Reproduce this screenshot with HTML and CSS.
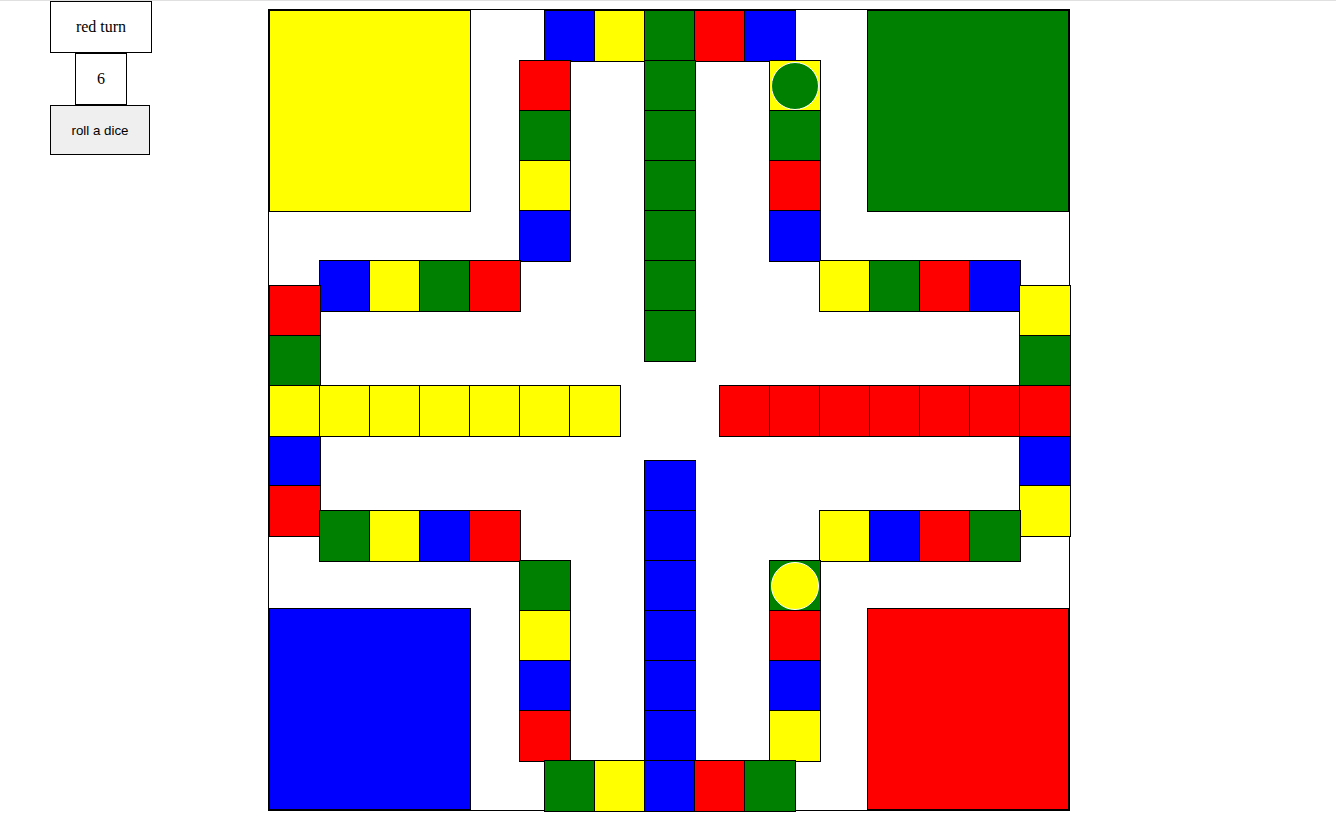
FILE: index.html
```html
<html>
<head>
  <meta http-equiv="Content-Type" content="text/html; charset=utf8">
  <title>Ludo</title>
  <link rel="stylesheet" href="styles.css">
  <script>
    // cells: [col, row, color, piece] in 25px steps
    var cells = [
      [11, 0, "blue"], [13, 0, "yellow"], [15, 0, "green"], [17, 0, "red"], [19, 0, "blue"],
      [10, 2, "red"], [10, 4, "green"], [10, 6, "yellow"], [10, 8, "blue"],
      [15, 2, "green"], [15, 4, "green"], [15, 6, "green"], [15, 8, "green"], [15, 10, "green"], [15, 12, "green"],
      [20, 2, "yellow", "green"], [20, 4, "green"], [20, 6, "red"], [20, 8, "blue"],
      [2, 10, "blue"], [4, 10, "yellow"], [6, 10, "green"], [8, 10, "red"],
      [22, 10, "yellow"], [24, 10, "green"], [26, 10, "red"], [28, 10, "blue"],
      [0, 11, "red"], [0, 13, "green"], [0, 17, "blue"], [0, 19, "red"],
      [30, 11, "yellow"], [30, 13, "green"], [30, 17, "blue"], [30, 19, "yellow"],
      [0, 15, "yellow"], [2, 15, "yellow"], [4, 15, "yellow"], [6, 15, "yellow"], [8, 15, "yellow"], [10, 15, "yellow"], [12, 15, "yellow"],
      [18, 15, "red"], [20, 15, "red"], [22, 15, "red"], [24, 15, "red"], [26, 15, "red"], [28, 15, "red"], [30, 15, "red"],
      [2, 20, "green"], [4, 20, "yellow"], [6, 20, "blue"], [8, 20, "red"],
      [22, 20, "yellow"], [24, 20, "blue"], [26, 20, "red"], [28, 20, "green"],
      [10, 22, "green"], [10, 24, "yellow"], [10, 26, "blue"], [10, 28, "red"],
      [15, 18, "blue"], [15, 20, "blue"], [15, 22, "blue"], [15, 24, "blue"], [15, 26, "blue"], [15, 28, "blue"],
      [20, 22, "green", "yellow"], [20, 24, "red"], [20, 26, "blue"], [20, 28, "yellow"],
      [11, 30, "green"], [13, 30, "yellow"], [15, 30, "blue"], [17, 30, "red"], [19, 30, "green"]
    ];

    function on_load() {
      var board = document.getElementById("board");
      for (var i = 0; i < cells.length; ++i) {
        var c = cells[i];
        var el = document.createElement("div");
        el.className = "cell " + c[2];
        el.style.gridColumn = (c[0] + 1) + " / span 2";
        el.style.gridRow = (c[1] + 1) + " / span 2";
        if (c[3]) {
          var p = document.createElement("div");
          p.className = "piece " + c[3];
          el.appendChild(p);
        }
        board.appendChild(el);
      }
    }
  </script>
</head>
<body onload="on_load()">
  <div class="page">
    <div class="controls">
      <div class="turn">red turn</div>
      <div class="dice">6</div>
      <button class="btn_roll">roll a dice</button>
    </div>
    <div id="board" class="board">
      <div class="home home_yellow yellow"></div>
      <div class="home home_green green"></div>
      <div class="home home_blue blue"></div>
      <div class="home home_red red"></div>
    </div>
  </div>
</body>
</html>
```

FILE: styles.css
```css
body {
  margin: 0;
  border-top: 1px solid #e0e0e0;
  font-family: "Liberation Serif", serif;
  font-size: 16px;
  color: #000000;
}
.page {
  display: flex;
  align-items: flex-start;
}
.controls {
  display: flex;
  flex-direction: column;
  align-items: flex-start;
  margin-left: 50px;
  width: 102px;
}
.turn {
  width: 100px;
  height: 50px;
  border: 1px solid #000000;
  display: flex;
  align-items: center;
  justify-content: center;
}
.dice {
  width: 50px;
  height: 50px;
  margin-left: 25px;
  border: 1px solid #000000;
  display: flex;
  align-items: center;
  justify-content: center;
}
.btn_roll {
  box-sizing: border-box;
  width: 100px;
  height: 50px;
  margin: 0;
  padding: 0;
  background-color: #efefef;
  border: 1px solid #000000;
  font-family: "Liberation Sans", Arial, sans-serif;
  font-size: 13.33px;
  color: #000000;
}
.board {
  margin-left: 116px;
  margin-top: 8px;
  width: 800px;
  height: 800px;
  border: 1px solid #000000;
  display: grid;
  grid-template-columns: repeat(32, 25px);
  grid-template-rows: repeat(32, 25px);
  background-color: #ffffff;
}
.home {
  width: 200px;
  height: 200px;
  border: 1px solid #000000;
}
.home_yellow {
  grid-column: 1 / span 9;
  grid-row: 1 / span 9;
  justify-self: start;
  align-self: start;
}
.home_green {
  grid-column: 24 / span 9;
  grid-row: 1 / span 9;
  justify-self: end;
  align-self: start;
}
.home_blue {
  grid-column: 1 / span 9;
  grid-row: 24 / span 9;
  justify-self: start;
  align-self: end;
}
.home_red {
  grid-column: 24 / span 9;
  grid-row: 24 / span 9;
  justify-self: end;
  align-self: end;
}
.cell {
  box-sizing: border-box;
  border: 1px solid #000000;
  margin: 0 -2px -2px 0;
  display: flex;
  align-items: center;
  justify-content: center;
}
.piece {
  width: 46px;
  height: 46px;
  border: 1px solid #ffffff;
  border-radius: 50%;
}
.yellow {
  background-color: #ffff00;
}
.green {
  background-color: #008000;
}
.red {
  background-color: #ff0000;
}
.blue {
  background-color: #0000ff;
}
```
